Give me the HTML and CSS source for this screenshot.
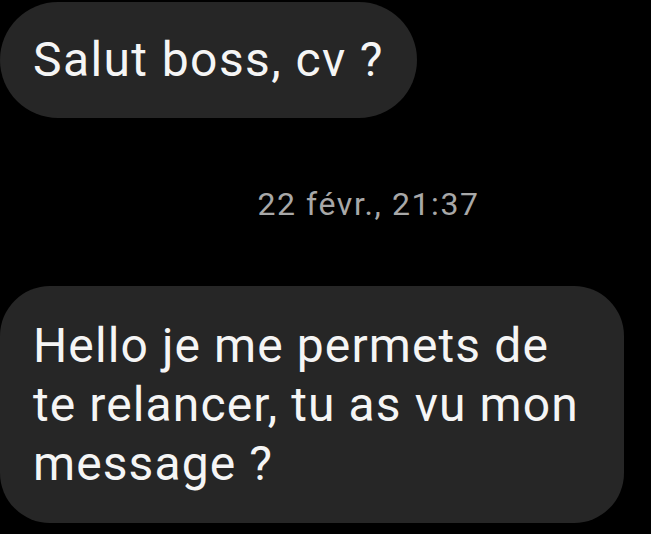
FILE: index.html
```html
<!DOCTYPE html>
<html lang="fr">
<head>
    <meta charset="UTF-8">
    <meta name="viewport" content="width=device-width, initial-scale=1.0">
    <title>Messages</title>
    <link rel="stylesheet" href="styles.css">
</head>
<body>
    <div class="thread">
        <div class="bubble short">Salut boss, cv ?</div>

        <div class="stamp">22 févr., 21:37</div>

        <div class="bubble long">Hello je me permets de te relancer, tu as vu mon message ?</div>
    </div>
</body>
</html>
```

FILE: styles.css
```css
body {
    margin: 0;
    background-color: #000;
    font-family: Roboto, "Liberation Sans", sans-serif;
}
.thread {
    display: flex;
    flex-direction: column;
    align-items: flex-start;
    padding-top: 2px;
}
.bubble {
    background-color: #262626;
    color: #f5f5f5;
    font-size: 48px;
    line-height: 59px;
    letter-spacing: 1.4px;
    box-sizing: border-box;
}
.bubble.short {
    padding: 28px 33px 29px 33px;
    border-radius: 58px;
}
.bubble.long {
    width: 624px;
    padding: 30px 24px 30px 33px;
    border-radius: 50px;
    letter-spacing: 1.1px;
}
.stamp {
    align-self: stretch;
    text-align: center;
    padding-left: 86px;
    margin: 68px 0 64px;
    color: #a8a8a8;
    font-size: 32px;
    line-height: 36px;
    letter-spacing: 1.6px;
}
```
